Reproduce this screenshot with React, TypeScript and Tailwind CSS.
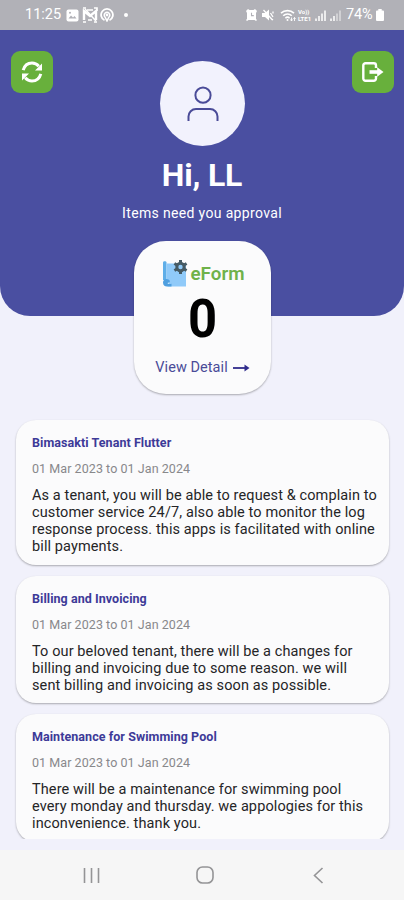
import type { ReactNode } from 'react';

interface Announcement {
    title: string;
    period: string;
    lines: string[];
}

const announcements: Announcement[] = [
    {
        title: 'Bimasakti Tenant Flutter',
        period: '01 Mar 2023 to 01 Jan 2024',
        lines: [
            'As a tenant, you will be able to request & complain to',
            'customer service 24/7, also able to monitor the log',
            'response process. this apps is facilitated with online',
            'bill payments.',
        ],
    },
    {
        title: 'Billing and Invoicing',
        period: '01 Mar 2023 to 01 Jan 2024',
        lines: [
            'To our beloved tenant, there will be a changes for',
            'billing and invoicing due to some reason. we will',
            'sent billing and invoicing as soon as possible.',
        ],
    },
    {
        title: 'Maintenance for Swimming Pool',
        period: '01 Mar 2023 to 01 Jan 2024',
        lines: [
            'There will be a maintenance for swimming pool',
            'every monday and thursday. we appologies for this',
            'inconvenience. thank you.',
        ],
    },
];

function StatusBar() {
    return (
        <div className="flex h-[30px] shrink-0 items-center justify-between bg-[#b1b1b7] pr-[20px] pl-[25px] text-white">
            <div className="flex items-center">
                <span className="w-[36px] text-[14.5px] leading-none whitespace-nowrap">11:25</span>
                <svg className="ml-[4.5px]" width="13" height="13" viewBox="0 0 13 13">
                    <rect x="0.5" y="0.5" width="12" height="12" rx="2" fill="currentColor" />
                    <path d="M2.5 9.5l2.5-3 2 2 1.5-1.5 2 2.5z" fill="#b1b1b7" />
                    <circle cx="4" cy="3.8" r="1" fill="#b1b1b7" />
                </svg>
                <svg className="ml-[3px]" width="16" height="16" viewBox="0 0 16 16" fill="none" stroke="currentColor">
                    <path d="M2 13V4l6 5 6-5v9" strokeWidth="2.4" />
                    <path d="M1 1h3M12 1h3v3M1 15h3M12 15h3M5 3h6M6 13h4" strokeWidth="1.6" />
                    <path d="M3 2l11 12" strokeWidth="1.5" />
                </svg>
                <svg className="ml-[2.5px]" width="14" height="14" viewBox="0 0 14 14" fill="none" stroke="currentColor">
                    <path d="M4.5 12.2a5.9 5.9 0 1 1 5 0" strokeWidth="1.8" />
                    <path d="M5.2 9.3a2.8 2.8 0 1 1 3.6 0L7 13z" strokeWidth="1.5" />
                    <circle cx="7" cy="7" r="1.4" fill="currentColor" stroke="none" />
                </svg>
                <span className="ml-[10px] size-[4px] rounded-full bg-white" />
            </div>
            <div className="flex items-center">
                <svg width="11" height="12" viewBox="0 0 11 12">
                    <path d="M0 2l2-2 1.5 1h4L9 0l2 2-1 2v6l1 1-1 1-1.5-1h-6L1 12l-1-1 1-1V4z" fill="currentColor" />
                    <path d="M5.5 3.8v2.8h2.3" fill="none" stroke="#b1b1b7" strokeWidth="1.1" />
                </svg>
                <svg className="ml-[5.5px]" width="12" height="12" viewBox="0 0 12 12">
                    <path d="M0 4h3l4-3.5v11L3 8H0z" fill="currentColor" />
                    <path d="M8.5 4l2.5 4M11 2.5v2M9 9.5l2 1.5M1.5 1l9 10" fill="none" stroke="currentColor" strokeWidth="1.3" />
                </svg>
                <svg className="ml-[6px]" width="17" height="13" viewBox="0 0 17 13" fill="none" stroke="currentColor" strokeWidth="1.6">
                    <path d="M1 4.2a9.4 9.4 0 0 1 13 0M3.2 6.8a6 6 0 0 1 8.6 0M5.4 9.2a3 3 0 0 1 4.2 0" />
                    <circle cx="7.5" cy="11" r="1" fill="currentColor" stroke="none" />
                    <path d="M11.5 12V8.5M14.5 8.5V12M10.5 10.5l1 1.5 1-1.5M13.5 10l1-1.5 1 1.5" strokeWidth="0.9" />
                </svg>
                <span className="ml-[1px] flex w-[14px] flex-col text-[6px] leading-[7px] font-bold">
                    <span>Vo))</span>
                    <span>LTE1</span>
                </span>
                <svg className="ml-[3px]" width="11" height="11" viewBox="0 0 11 11" fill="none" stroke="currentColor" strokeWidth="1.5">
                    <path d="M1 11V8.5M4 11V6M7 11V3.5M10 11V0.5" />
                </svg>
                <svg className="ml-[4px]" width="11" height="11" viewBox="0 0 11 11" fill="none" stroke="currentColor" strokeWidth="1.5">
                    <path d="M1 11V8.5M4 11V6" />
                    <path d="M7 11V3.5M10 11V0.5" strokeOpacity="0.55" />
                </svg>
                <span className="ml-[5px] w-[28px] text-[14.5px] leading-none tracking-[-0.1px] whitespace-nowrap">74%</span>
                <svg className="ml-[2px]" width="8" height="12" viewBox="0 0 8 12">
                    <path d="M2.3 0h3.4v1.5H7a1 1 0 0 1 1 1V11a1 1 0 0 1-1 1H1a1 1 0 0 1-1-1V2.500a1 1 0 0 1 1-1h1.300z" fill="currentColor" />
                </svg>
            </div>
        </div>
    );
}

function IconButton({ label, children }: { label: string; children: ReactNode }) {
    return (
        <button aria-label={label} className="flex size-[42px] items-center justify-center rounded-[9px] bg-[#68b03c] text-white">
            {children}
        </button>
    );
}

function Header() {
    return (
        <header className="h-[286px] shrink-0 rounded-b-[30px] bg-[#4a4fa1] text-white">
            <div className="flex items-start justify-between pr-[10px] pl-[11px]">
                <div className="pt-[21px]">
                    <IconButton label="Refresh">
                        <svg width="22" height="22" viewBox="0 0 22 22" fill="none" stroke="currentColor" strokeWidth="3">
                            <path d="M2.2 9.2C3.4 4.800 6.800 2 11 2c2.800 0 5 1.100 6.800 3.200" />
                            <path d="M19.800 12.800c-1.200 4.400-4.600 7.200-8.800 7.200-2.800 0-5-1.100-6.800-3.200" />
                            <path d="M21 2.600v7h-7zM1 19.400v-7h7z" fill="currentColor" stroke="none" />
                        </svg>
                    </IconButton>
                </div>
                <div className="mt-[31px] flex size-[85px] items-center justify-center rounded-full bg-[#f2f2fd]">
                    <svg width="32" height="36" viewBox="0 0 32 36" fill="none" stroke="#4a4b98" strokeWidth="2">
                        <circle cx="16" cy="9.2" r="7.6" />
                        <path d="M1.5 35v-4.5a7.5 7.5 0 0 1 7.5-7.5h14a7.5 7.5 0 0 1 7.5 7.5V35" />
                    </svg>
                </div>
                <div className="pt-[21px]">
                    <IconButton label="Log out">
                        <svg width="22" height="20" viewBox="0 0 22 20" fill="none" stroke="currentColor" strokeWidth="2.4">
                            <path d="M14 6V3.5a2.2 2.2 0 0 0-2.2-2.2H3.5a2.2 2.2 0 0 0-2.2 2.2v13a2.2 2.2 0 0 0 2.2 2.2h8.3a2.2 2.2 0 0 0 2.2-2.2V14" />
                            <path d="M7.5 10h9" strokeWidth="3.6" />
                            <path d="M15.200 5.200l6.300 4.800-6.300 4.800z" fill="currentColor" stroke="none" />
                        </svg>
                    </IconButton>
                </div>
            </div>
            <h1 className="mt-[10px] text-center text-[32px] leading-[38px] font-bold tracking-[-0.2px]">Hi, LL</h1>
            <p className="mt-[10px] text-center text-[14px] leading-[18px] tracking-[0.34px]">Items need you approval</p>
        </header>
    );
}

function FormCard() {
    return (
        <section className="relative mx-auto -mt-[75px] ml-[134px] flex h-[153px] w-[137px] shrink-0 flex-col items-center rounded-[32px] bg-[#fbfbfc] shadow-[0_1px_2px_rgba(0,0,0,0.3)]">
            <div className="mt-[17px] flex h-[30px] items-center pl-[1px]">
                <svg width="28" height="29" viewBox="0 0 28 29">
                    <path d="M1 3.500c0-1.800 3.500-1.800 3.500 0V21H1z" fill="#5faee8" />
                    <path d="M4.500 4.500H24v23H5c2.500-.5 1.500-3 1-5l-1.500-2z" fill="#90caf9" />
                    <path d="M1 23.500c0-3 3-4.500 5.500-3 2.200 1.400 1.500 3.300-.5 3-1 1.500 1 2 3.500 1.200V27.500H5c-2.500 0-4-1.500-4-4z" fill="#4f9fe0" />
                    <g stroke="#455a64" fill="none">
                        <circle cx="18.500" cy="8" r="3.700" strokeWidth="3" />
                        <path d="M18.500 1v3M18.500 12v3M12.400 4.500l2.600 1.500M22 10l2.600 1.500M12.400 11.500L15 10M22 6l2.600-1.500" strokeWidth="3" />
                    </g>
                </svg>
                <span className="mt-[3px] ml-[1px] text-[18.8px] font-semibold text-[#6fb24a]">eForm</span>
            </div>
            <div className="mt-px scale-x-[0.94] text-[54px] leading-[60px] font-bold text-black">0</div>
            <a className="mt-[9px] flex items-center text-[14.5px] leading-[20px] tracking-[0.06px] text-[#4a4b98]">
                View Detail
                <svg className="ml-[5px]" width="17" height="8" viewBox="0 0 17 8">
                    <path d="M0 4h13" stroke="#302c8c" strokeWidth="1.8" />
                    <path d="M11.5 0.5L16.5 4l-5 3.5z" fill="#302c8c" />
                </svg>
            </a>
        </section>
    );
}

function AnnouncementCard({ item }: { item: Announcement }) {
    return (
        <article className="shrink-0 rounded-[20px] bg-[#fbfbfc] px-[16px] pt-[15px] pb-[9.5px] shadow-[0_1px_2px_rgba(0,0,0,0.3)]">
            <h2 className="text-[12.5px] leading-[16px] font-bold tracking-[0.06px] text-[#3d3a98]">{item.title}</h2>
            <p className="mt-[10px] text-[12.5px] leading-[16px] tracking-[0.06px] text-[#88888b]">{item.period}</p>
            <div className="mt-[10px] text-[14.5px] leading-[17px] tracking-[0.11px] text-[#252527]">
                {item.lines.map((line) => (
                    <p key={line} className="whitespace-nowrap">{line}</p>
                ))}
            </div>
        </article>
    );
}

function NavigationBar() {
    return (
        <nav className="flex h-[50px] shrink-0 items-center bg-[#f6f6f6] pl-[83px] text-[#949496]">
            <svg width="17" height="17" viewBox="0 0 17 17" fill="none" stroke="currentColor" strokeWidth="1.6">
                <path d="M1.5 1v15M8.5 1v15M15.5 1v15" />
            </svg>
            <svg className="ml-[95.5px]" width="18" height="18" viewBox="0 0 18 18" fill="none" stroke="currentColor" strokeWidth="1.6">
                <rect x="1" y="1" width="16" height="16" rx="5.5" />
            </svg>
            <svg className="ml-[99.5px]" width="11" height="17" viewBox="0 0 11 17" fill="none" stroke="currentColor" strokeWidth="1.6">
                <path d="M9.5 1L1.5 8.5l8 7.5" />
            </svg>
        </nav>
    );
}

export default function App() {
    return (
        <div className="flex h-[900px] w-[404px] flex-col overflow-hidden bg-[#f1f1fb] font-['Roboto',sans-serif]">
            <StatusBar />
            <Header />
            <FormCard />
            <main className="mt-[24px] flex h-[421px] shrink-0 flex-col gap-[11px] overflow-hidden px-[16px] pt-[2px] pr-[15px]">
                {announcements.map((item) => (
                    <AnnouncementCard key={item.title} item={item} />
                ))}
            </main>
            <div className="grow" />
            <NavigationBar />
        </div>
    );
}
